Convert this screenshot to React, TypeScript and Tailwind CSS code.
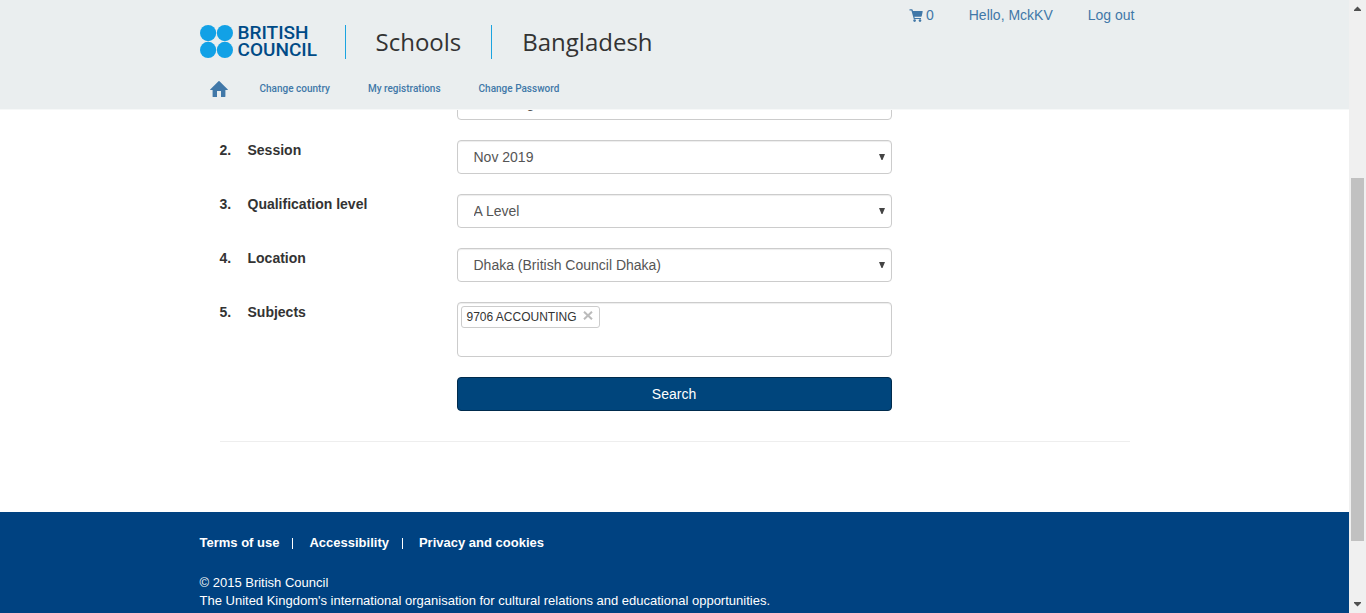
import type { ReactNode } from "react";

function CartIcon() {
  return (
    <svg width="14" height="13" viewBox="0 0 14 13" fill="currentColor" aria-hidden="true">
      <path d="M.5 .2H3c.3 0 .5.2.6.5l.4 1.200h9.200c.4 0 .6.3.5.600l-1 4.800c-.1.3-.3.5-.6.500H5.400l.3 1.100h6.300v1.200H4.800L2.400 1.500H.5z" />
      <circle cx="5.600" cy="11.600" r="1.300" />
      <circle cx="11" cy="11.600" r="1.300" />
    </svg>
  );
}

function HomeIcon() {
  return (
    <svg width="18" height="16" viewBox="0 0 18 16" fill="currentColor" aria-hidden="true">
      <path d="M8.500.3a.7.7 0 0 1 1 0l8.300 8.200c.2.3.1.600-.2.600H15.400V15.500c0 .3-.2.500-.5.500H11V10H7v6H3.100a.5.5 0 0 1-.5-.5V9.100H.4c-.3 0-.4-.3-.2-.6z" />
    </svg>
  );
}

function Logo() {
  return (
    <a href="#home" aria-label="British Council" className="flex w-[115px] items-center gap-[5px] pb-px text-[#004b87]">
      <svg width="33" height="33" viewBox="0 0 33 33" fill="#12a1e6" aria-hidden="true" className="shrink-0">
        <circle cx="8.1" cy="8.1" r="8.1" />
        <circle cx="24.900" cy="8.1" r="8.1" />
        <circle cx="8.1" cy="24.900" r="8.1" />
        <circle cx="24.900" cy="24.900" r="8.1" />
      </svg>
      <span className="flex flex-col font-[Roboto,sans-serif] text-[19px] leading-[17px] font-medium">
        <span>BRITISH</span>
        <span>COUNCIL</span>
      </span>
    </a>
  );
}

function Header() {
  return (
    <header className="shrink-0 border-b border-[#f6f8f8] bg-[#eaeeef] text-[#4178a8]">
      <div className="mx-auto max-w-[950px]">
        <div className="flex items-start justify-between">
          <div className="flex h-[59px] items-end">
            <Logo />
            <div className="ml-[30px] flex h-[34px] items-center border-l border-[#1ba4e0] px-[30px] font-['Open_Sans',sans-serif] text-2xl text-[#333]">
              Schools
            </div>
            <div className="flex h-[34px] items-center border-l border-[#1ba4e0] pl-[30px] font-['Open_Sans',sans-serif] text-2xl text-[#333]">
              Bangladesh
            </div>
          </div>
          <div className="flex gap-[35px] pt-[5px] pr-[15px] text-sm">
            <a href="#cart" aria-label="Cart" className="flex items-center gap-[3px]">
              <CartIcon />0
            </a>
            <a href="#profile">Hello, MckKV</a>
            <a href="#logout">Log out</a>
          </div>
        </div>
        <nav className="flex items-center gap-[38px] pt-5 pb-[10px] pl-[10px] font-[Roboto,sans-serif] text-[10px] leading-5 font-medium">
          <a href="#home" aria-label="Home" className="-mr-[6px]">
            <HomeIcon />
          </a>
          <a href="#country">Change country</a>
          <a href="#registrations">My registrations</a>
          <a href="#password">Change Password</a>
        </nav>
      </div>
    </header>
  );
}

function Field({ children }: { children: ReactNode }) {
  return <div className="max-w-[435px] flex-1">{children}</div>;
}

function Row({ n, id, label, children }: { n: number; id: string; label: string; children: ReactNode }) {
  return (
    <div className="flex">
      <label htmlFor={id} className="flex w-[237px] shrink-0 text-sm font-bold text-[#333]">
        <span className="w-7">{n}.</span>
        <span>{label}</span>
      </label>
      <Field>{children}</Field>
    </div>
  );
}

function Select({ id, value, label }: { id: string; value: string; label?: string }) {
  return (
    <div className="relative">
      <select
        id={id}
        aria-label={label}
        className="block h-[34px] w-full appearance-none rounded-[4px] border border-[#ccc] bg-white px-4 text-sm text-[#555] shadow-[inset_0_1px_1px_rgba(0,0,0,0.075)]"
      >
        <option>{value}</option>
      </select>
      <svg
        width="6"
        height="6"
        viewBox="0 0 6 6"
        fill="#444"
        aria-hidden="true"
        className="pointer-events-none absolute top-[14px] right-[7px]"
      >
        <path d="M0 0h6L3.500 6h-1z" />
      </svg>
    </div>
  );
}

function SearchForm() {
  return (
    <form className="-mt-6 flex flex-col gap-5" onSubmit={(e) => e.preventDefault()}>
      <div className="flex pl-[237px]">
        <Field>
          <Select id="board" value="Cambridge" label="Exam board" />
        </Field>
      </div>
      <Row n={2} id="session" label="Session">
        <Select id="session" value="Nov 2019" />
      </Row>
      <Row n={3} id="level" label="Qualification level">
        <Select id="level" value="A Level" />
      </Row>
      <Row n={4} id="location" label="Location">
        <Select id="location" value="Dhaka (British Council Dhaka)" />
      </Row>
      <Row n={5} id="subjects" label="Subjects">
        <div className="flex h-[55px] items-start rounded-[4px] border border-[#ccc] p-[3px] shadow-[inset_0_1px_1px_rgba(0,0,0,0.075)]">
          <span className="flex h-[22px] items-center gap-[6px] rounded-[3px] border border-[#ccc] pr-[6px] pl-[5px] text-xs text-[#333]">
            9706 ACCOUNTING
            <button type="button" aria-label="Remove 9706 ACCOUNTING" className="pb-1 text-[#bbb]">
              <svg width="10" height="9" viewBox="0 0 10 9" stroke="currentColor" strokeWidth="2" aria-hidden="true">
                <path d="M1 .7l8 7.600M9 .7l-8 7.600" />
              </svg>
            </button>
          </span>
          <input id="subjects" type="text" className="h-[22px] min-w-0 flex-1 px-1 text-xs outline-none" />
        </div>
      </Row>
      <div className="flex pl-[237px]">
        <button
          type="submit"
          className="h-[34px] max-w-[435px] flex-1 rounded-[4px] border border-[#002b4d] bg-[#00457c] text-sm text-white"
        >
          Search
        </button>
      </div>
    </form>
  );
}

function Footer() {
  return (
    <footer className="flex-1 bg-[#004281] pt-[22px] text-[13px] leading-[18px] text-white">
      <div className="mx-auto max-w-[950px]">
        <div className="flex items-center font-bold">
          <a href="#terms">Terms of use</a>
          <span className="mr-4 ml-[13px] h-[11px] w-px bg-white" />
          <a href="#accessibility">Accessibility</a>
          <span className="mr-4 ml-[13px] h-[11px] w-px bg-white" />
          <a href="#privacy">Privacy and cookies</a>
        </div>
        <p className="mt-[22px]">© 2015 British Council</p>
        <p>The United Kingdom's international organisation for cultural relations and educational opportunities.</p>
      </div>
    </footer>
  );
}

function Scrollbar() {
  return (
    <div aria-hidden="true" className="flex w-[17px] shrink-0 flex-col bg-[#f0f0f0]">
      <svg width="17" height="17" viewBox="0 0 17 17" fill="#505050" className="shrink-0">
        <path d="M5 11V10l3.500-3.500L12 10v1z" />
      </svg>
      <div className="grow-[161]" />
      <div className="mx-[2px] grow-[363] bg-[#c1c1c1]" />
      <div className="grow-[55]" />
      <svg width="17" height="17" viewBox="0 0 17 17" fill="#505050" className="shrink-0">
        <path d="M5 6v1l3.500 3.500L12 7V6z" />
      </svg>
    </div>
  );
}

export default function App() {
  return (
    <div className="flex h-screen overflow-hidden bg-white font-['Liberation_Sans',Arial,sans-serif]">
      <div className="flex min-w-0 flex-1 flex-col">
        <Header />
        <main className="shrink-0 overflow-hidden">
          <div className="mx-auto max-w-[950px] px-5 pb-[70px]">
            <SearchForm />
            <hr className="mt-[30px] border-[#eee]" />
          </div>
        </main>
        <Footer />
      </div>
      <Scrollbar />
    </div>
  );
}
